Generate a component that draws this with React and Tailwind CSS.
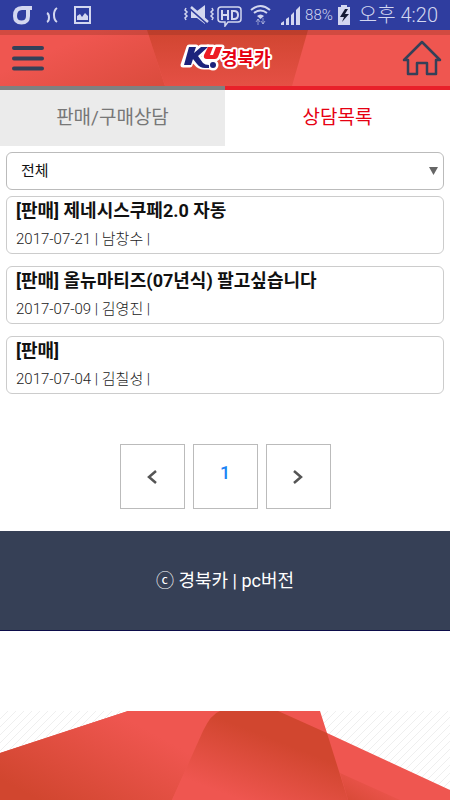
import { useState } from 'react';

const posts = [
  { id: 1, title: '[판매] 제네시스쿠페2.0 자동', date: '2017-07-21', writer: '남창수' },
  { id: 2, title: '[판매] 올뉴마티즈(07년식) 팔고싶습니다', date: '2017-07-09', writer: '김영진' },
  { id: 3, title: '[판매]', date: '2017-07-04', writer: '김칠성' },
];

function StatusBar() {
  return (
    <div className="h-[30px] bg-[#2f3d9f] text-[#d3d7f0] flex items-center justify-between px-3">
      <svg width="80" height="22" viewBox="0 0 80 22" fill="none" stroke="currentColor">
        <path d="M20 4H10C5 4 3 7 3 12c0 4 2 6.500 6.500 6.500S16 16 16 12V5" strokeWidth="4" />
        <path d="M35 9q2 1 2 4.500T35 18M45 4q-3 2-3 7t3 7" strokeWidth="2" />
        <rect x="63" y="3" width="15" height="16" strokeWidth="2" />
        <path d="M65 16v-4l3-2 2 3 3-4 3 3v4z" fill="currentColor" stroke="none" />
      </svg>
      <div className="flex items-center">
        <svg width="122" height="24" viewBox="182 3 122 24" fill="none" stroke="currentColor">
          <path d="M185 8l-1 2 2 2-2 2 2 2-2 2 1 2M211 8l1 2-2 2 2 2-2 2 2 2-1 2" strokeWidth="1.500" />
          <path d="M190 11h6l8-6v19l-8-6h-6z" fill="currentColor" stroke="none" />
          <path d="M190 9l17 15" stroke="#2f3d9f" strokeWidth="3" />
          <path d="M190 7l17 15" strokeWidth="2.500" />
          <path d="M220 7h17q3 0 3 3v9q0 3-3 3h-10l-3 4v-4h-4q-3 0-3-3v-9q0-3 3-3z" strokeWidth="1.500" />
          <path d="M221 10v10M227 10v10M221 15h6M231 11h2q4 0 4 4t-4 4h-2z" strokeWidth="2" />
          <path d="M250 10q9.500-8 19 0M253 13q6.500-5 13 0" strokeWidth="2" />
          <path d="M256 16q3.500-3 7 0l-3.500 3z" fill="currentColor" stroke="none" />
          <path d="M257 25v-6m-2 3l2-3 2 3M262 18v6m-2-3l2 3 2-3" strokeWidth="1" opacity=".6" />
          <path d="M280 25v-2l3-2v4zM285 25v-6l3-2v8zM290 25v-10l3-3v13zM295 25v-15l4-4v19z" fill="currentColor" stroke="none" />
        </svg>
        <span className="text-[15px] font-light">88%</span>
        <svg className="ml-1 mr-2" width="14" height="20" viewBox="0 0 14 20">
          <path d="M4 0h6v2h3v18H1V2h3z" fill="currentColor" />
          <path d="M8 4L3 12h4l-2 5 7-8H8l3-5z" fill="#141a34" />
        </svg>
        <span className="text-[20px] font-light leading-[30px]">오후 4:20</span>
      </div>
    </div>
  );
}

function Logo() {
  return (
    <svg width="100" height="32" viewBox="0 0 100 32" role="img" aria-label="KU 경북카">
      <g fill="none" stroke="#fff" strokeWidth="5" strokeLinejoin="round">
        <path d="M16 5h7l-2 6 7-6h7l-10 9 5 7h9v4h-8q-5 0-8-4l-4-4-2 6h-7z" />
        <path d="M35 5h5l-3 8h3l3-8h6l-4 10q-1 2-3 2h-8q-4 0-3-4z" />
        <circle cx="40" cy="23" r="3" />
      </g>
      <path d="M16 5h7l-2 6 7-6h7l-10 9 5 7q2 2 6 2v3h-4q-5 0-8-4l-4-5-2 6h-7z" fill="#1c237c" />
      <path d="M35 5h5l-3 8h3l3-8h6l-4 10q-1 2-3 2h-8q-4 0-3-4z" fill="#ed1c24" />
      <circle cx="40" cy="23" r="3" fill="#1c237c" />
      <text x="48" y="23" fontSize="18" fontWeight="700" fill="#e60012" stroke="#fff" strokeWidth="4" strokeLinejoin="round" paintOrder="stroke">경북카</text>
    </svg>
  );
}

function Header() {
  return (
    <header className="relative h-14 bg-[#ef5650] flex items-center justify-between px-2 overflow-hidden">
      <svg className="absolute inset-0 w-full h-full" viewBox="0 0 450 56" preserveAspectRatio="none" aria-hidden="true">
        <defs>
          <linearGradient id="headLeft" gradientUnits="userSpaceOnUse" x1="75" y1="10" x2="110" y2="90">
            <stop offset="0" stopColor="#ef5650" />
            <stop offset="1" stopColor="#d84a3a" />
          </linearGradient>
          <linearGradient id="headMid" x1="0" y1="0" x2="0" y2="1">
            <stop offset="0" stopColor="#d04530" />
            <stop offset="1" stopColor="#e55045" />
          </linearGradient>
        </defs>
        <path d="M0 0h147l18 56H0z" fill="url(#headLeft)" />
        <path d="M147 0h161l-16 56H165z" fill="url(#headMid)" />
        <path d="M0 0h450v5H0z" fill="#8c3020" opacity=".3" />
      </svg>
      <button type="button" aria-label="메뉴" className="relative ml-1">
        <svg width="32" height="26" viewBox="0 0 32 26" stroke="#344058" strokeWidth="4" strokeLinecap="round">
          <path d="M2 3h28M2 13.500h28M2 23.500h28" />
        </svg>
      </button>
      <a href="#home" className="relative">
        <Logo />
      </a>
      <a href="#home" aria-label="홈" className="relative">
        <svg width="40" height="36" viewBox="0 0 40 36" fill="none" stroke="#344058" strokeWidth="2.500" strokeLinejoin="round">
          <path d="M20 2L2 20h4v14h9V23h10v11h9V20h4z" />
        </svg>
      </a>
    </header>
  );
}

function Banner() {
  return (
    <svg className="block w-full h-[89px]" viewBox="0 0 450 89" preserveAspectRatio="none" aria-hidden="true">
      <defs>
        <pattern id="hatch" width="8" height="8" patternUnits="userSpaceOnUse">
          <path d="M-1 9L9 -1" stroke="#efefef" strokeWidth="1" />
        </pattern>
        <linearGradient id="left" gradientUnits="userSpaceOnUse" x1="40" y1="90" x2="95" y2="-10">
          <stop offset="0" stopColor="#d1462f" />
          <stop offset="1" stopColor="#ef5650" />
        </linearGradient>
        <linearGradient id="fold" gradientUnits="userSpaceOnUse" x1="265" y1="25" x2="240" y2="89">
          <stop offset="0" stopColor="#d1462f" />
          <stop offset="1" stopColor="#ef5650" />
        </linearGradient>
        <linearGradient id="right" gradientUnits="userSpaceOnUse" x1="375" y1="65" x2="352" y2="105">
          <stop offset="0" stopColor="#ef5650" />
          <stop offset="1" stopColor="#d1462f" />
        </linearGradient>
      </defs>
      <rect width="450" height="89" fill="url(#hatch)" />
      <path d="M0 42L128 0h192l7 22 123 57v10H0z" fill="#ef5650" />
      <path d="M0 42L128 0h92q-9 3-17 20l-31 69H0z" fill="url(#left)" />
      <path d="M220 0h58l49 22 21 67H172l31-69q8-17 17-20z" fill="url(#fold)" />
      <path d="M340 62l60 27h-52z" fill="url(#right)" />
    </svg>
  );
}

export default function App() {
  const [tab, setTab] = useState('list');
  const on = 'border-[#e8202a] bg-white text-[#e60012]';
  const off = 'border-[#808080] bg-[#ebebeb] text-[#777]';

  return (
    <div className="bg-white text-[#111] font-[Roboto,'Noto_Sans_CJK_KR',sans-serif]">
      <StatusBar />
      <Header />

      <nav className="grid grid-cols-2">
        <button type="button" onClick={() => setTab('ask')} className={`h-[60px] border-t-4 text-[19px] ${tab === 'ask' ? on : off}`}>판매/구매상담</button>
        <button type="button" onClick={() => setTab('list')} className={`h-[60px] border-t-4 text-[19px] ${tab === 'list' ? on : off}`}>상담목록</button>
      </nav>

      <main className="px-[6px] pt-[6px]">
        <div className="relative">
          <select aria-label="상담 구분" className="block w-full h-[38px] appearance-none rounded-md border border-[#bbb] bg-white pl-[14px] text-[15px]">
            <option>전체</option>
            <option>판매</option>
            <option>구매</option>
          </select>
          <svg className="absolute right-[6px] top-[15px] pointer-events-none" width="9" height="8" viewBox="0 0 9 8">
            <path d="M0 0h9L4.500 8z" fill="#666" />
          </svg>
        </div>

        <ul className="mt-[6px] flex flex-col gap-3">
          {posts.map((post) => (
            <li key={post.id}>
              <a href={`#post-${post.id}`} className="block h-[58px] rounded-md border border-[#ccc] px-[9px]">
                <h2 className="text-[18px] leading-7 font-bold">{post.title}</h2>
                <p className="text-[15px] leading-7 font-light text-[#222]">{post.date} | {post.writer} |</p>
              </a>
            </li>
          ))}
        </ul>

        <div className="mt-[50px] flex justify-center gap-2">
          <button type="button" aria-label="이전" className="w-[65px] h-[65px] border border-[#bbb] flex items-center justify-center">
            <svg width="10" height="14" viewBox="0 0 10 14" fill="none" stroke="#555" strokeWidth="2.500"><path d="M9 1L2 7l7 6" /></svg>
          </button>
          <button type="button" aria-current="page" className="w-[65px] h-[65px] border border-[#bbb] pb-2 text-[18px] font-medium text-[#1a84f5]">1</button>
          <button type="button" aria-label="다음" className="w-[65px] h-[65px] border border-[#bbb] flex items-center justify-center">
            <svg width="10" height="14" viewBox="0 0 10 14" fill="none" stroke="#555" strokeWidth="2.500"><path d="M1 1l7 6-7 6" /></svg>
          </button>
        </div>
      </main>

      <footer className="mt-[22px] h-[100px] border-b border-[#0c0c4a] bg-[#364056] text-white text-[18px] flex items-center justify-center">
        <p>ⓒ 경북카 | <a href="#pc">pc버전</a></p>
      </footer>

      <div className="mt-20">
        <Banner />
      </div>
    </div>
  );
}
